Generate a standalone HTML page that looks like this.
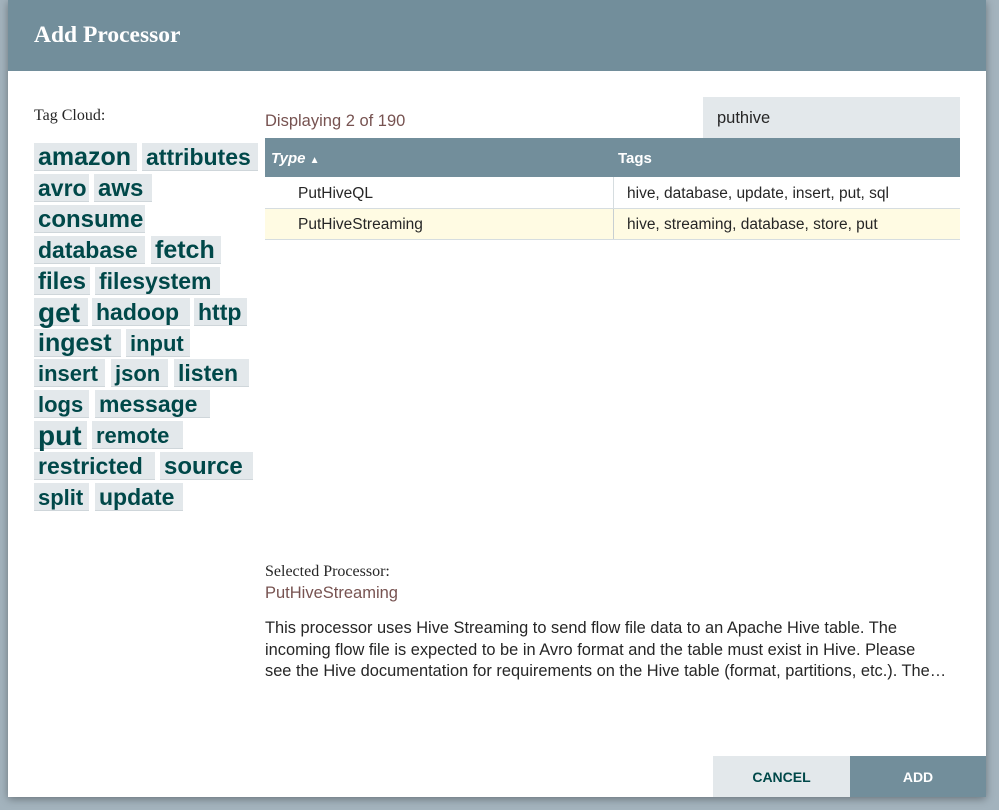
<!DOCTYPE html><html><head><style>
body{margin:0;width:999px;height:810px;background:#a3b3bd;position:relative;overflow:hidden;font-family:"Liberation Sans",sans-serif}
.dlg{position:absolute;left:8px;top:0;width:978px;height:797px;background:#fff;box-shadow:0 2px 8px rgba(0,0,0,.35)}
.hd{position:absolute;left:0;top:0;width:978px;height:71px;background:#728e9b;color:#fff;font-family:"Liberation Serif",serif;font-weight:bold;font-size:23.5px;line-height:71px;padding-left:26px;box-sizing:border-box}
.t{position:absolute;background:#e3e8eb;border-bottom:1px solid #cfd6da;color:#004849;font-weight:bold;height:28px;line-height:29px;padding-left:4px;box-sizing:border-box;white-space:nowrap}
.a{position:absolute;white-space:nowrap}
</style></head><body>
<div class="dlg">
<div class="hd">Add Processor</div>
<div class="a" style="left:26px;top:107px;font-family:'Liberation Serif',serif;font-size:16px;color:#262626">Tag Cloud:</div>
<div class="a" style="left:257px;top:112px;font-size:16.5px;color:#775351">Displaying 2 of 190</div>
<div class="a" style="left:695px;top:97px;width:257px;height:41px;background:#e3e8eb;line-height:43px;padding-left:14px;box-sizing:border-box;font-size:16.5px;color:#262626">puthive</div>
<div class="a" style="left:257px;top:138px;width:695px;height:39px;background:#728e9b;color:#fff;font-weight:bold;font-size:15px;line-height:41px">
<span style="position:absolute;left:6px;font-style:italic">Type <span style="font-size:10px;font-style:normal">▲</span></span><span style="position:absolute;left:353px">Tags</span></div>
<div class="a" style="left:257px;top:177px;width:695px;height:31px;border-bottom:1px solid #d6dde0;font-size:15.5px;line-height:33px;color:#262626"><span style="position:absolute;left:33px">PutHiveQL</span><span style="position:absolute;left:348px;top:0;height:31px;border-left:1px solid #d6dde0"></span><span style="position:absolute;left:362px">hive, database, update, insert, put, sql</span></div>
<div class="a" style="left:257px;top:209px;width:695px;height:30px;background:#fffbe3;border-bottom:1px solid #d6dde0;font-size:15.5px;line-height:32px;color:#262626"><span style="position:absolute;left:33px">PutHiveStreaming</span><span style="position:absolute;left:348px;top:0;height:30px;border-left:1px solid #c8cfd2"></span><span style="position:absolute;left:362px">hive, streaming, database, store, put</span></div>
<div class="a" style="left:257px;top:563px;font-family:'Liberation Serif',serif;font-size:16px;color:#262626">Selected Processor:</div>
<div class="a" style="left:257px;top:584px;font-size:16.5px;color:#775351">PutHiveStreaming</div>
<div class="a" style="left:257px;top:618px;font-size:16.4px;line-height:21.5px;color:#262626">This processor uses Hive Streaming to send flow file data to an Apache Hive table. The<br>incoming flow file is expected to be in Avro format and the table must exist in Hive. Please<br>see the Hive documentation for requirements on the Hive table (format, partitions, etc.). The…</div>
<div class="a" style="left:705px;top:756px;width:137px;height:41px;background:#e3e8eb;color:#004849;font-weight:bold;font-size:14px;line-height:42px;text-align:center">CANCEL</div>
<div class="a" style="left:842px;top:756px;width:136px;height:41px;background:#728e9b;color:#fff;font-weight:bold;font-size:14px;line-height:42px;text-align:center">ADD</div>
</div>
<div class="t" style="left:34px;top:143px;width:103px;font-size:25px">amazon</div>
<div class="t" style="left:142px;top:143px;width:116px;font-size:23px">attributes</div>
<div class="t" style="left:34px;top:174px;width:55px;font-size:23px">avro</div>
<div class="t" style="left:94px;top:174px;width:58px;font-size:24px">aws</div>
<div class="t" style="left:34px;top:205px;width:111px;font-size:24px">consume</div>
<div class="t" style="left:34px;top:236px;width:111px;font-size:23px">database</div>
<div class="t" style="left:151px;top:236px;width:70px;font-size:25px">fetch</div>
<div class="t" style="left:34px;top:267px;width:56px;font-size:24px">files</div>
<div class="t" style="left:95px;top:267px;width:125px;font-size:23px">filesystem</div>
<div class="t" style="left:34px;top:298px;width:54px;font-size:28px">get</div>
<div class="t" style="left:92px;top:298px;width:98px;font-size:23px">hadoop</div>
<div class="t" style="left:194px;top:298px;width:53px;font-size:23px">http</div>
<div class="t" style="left:34px;top:329px;width:87px;font-size:25px">ingest</div>
<div class="t" style="left:126px;top:329px;width:64px;font-size:22px">input</div>
<div class="t" style="left:34px;top:359px;width:71px;font-size:22px">insert</div>
<div class="t" style="left:111px;top:359px;width:57px;font-size:22px">json</div>
<div class="t" style="left:174px;top:359px;width:75px;font-size:23px">listen</div>
<div class="t" style="left:34px;top:390px;width:55px;font-size:22px">logs</div>
<div class="t" style="left:95px;top:390px;width:115px;font-size:23px">message</div>
<div class="t" style="left:34px;top:421px;width:53px;font-size:28px">put</div>
<div class="t" style="left:92px;top:421px;width:91px;font-size:22px">remote</div>
<div class="t" style="left:34px;top:452px;width:121px;font-size:23px">restricted</div>
<div class="t" style="left:160px;top:452px;width:93px;font-size:24px">source</div>
<div class="t" style="left:34px;top:483px;width:55px;font-size:22px">split</div>
<div class="t" style="left:95px;top:483px;width:88px;font-size:23px">update</div>
</body></html>
